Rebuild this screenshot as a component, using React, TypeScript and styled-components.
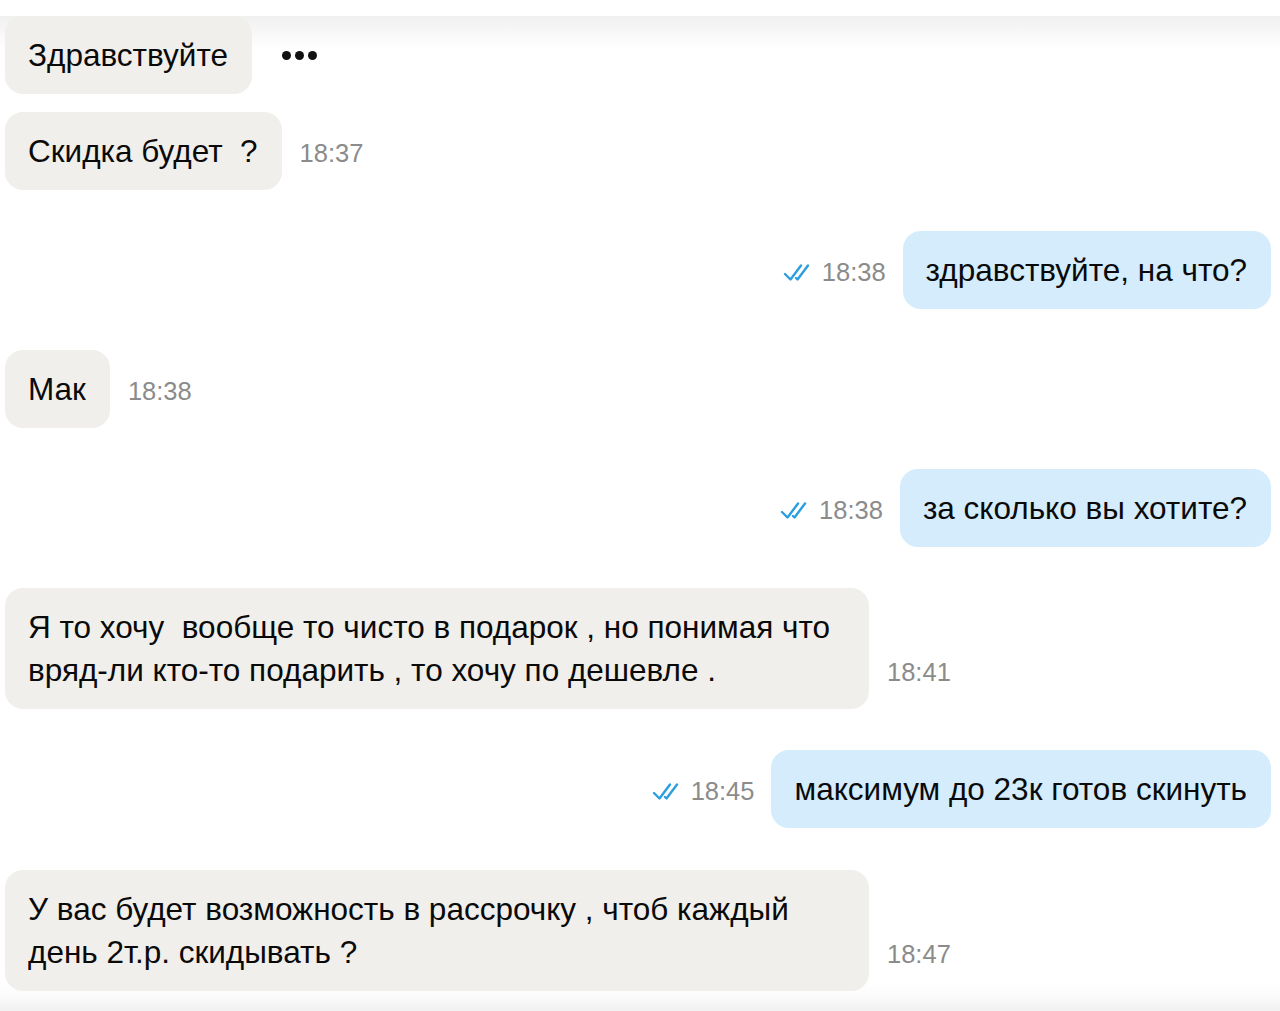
import React from "react";
import styled, { createGlobalStyle } from "styled-components";

const Global = createGlobalStyle`
  html, body { margin: 0; padding: 0; background: #fff; }
  body { font-family: "Liberation Sans", Arial, Helvetica, sans-serif; }
`;

const Page = styled.div`
  width: 1280px;
  height: 1011px;
  display: flex;
  flex-direction: column;
  background: #fff;
  overflow: hidden;
`;

const TopGap = styled.div`
  height: 16px;
  flex: none;
  background: #fff;
`;

const Chat = styled.div`
  flex: 1;
  display: flex;
  flex-direction: column;
  padding: 0 9px 0 5px;
  background:
    linear-gradient(to bottom, #f0f0f0 0px, #fafafa 22px, rgba(255,255,255,0) 34px),
    linear-gradient(to top, #f1f1f1 0px, #fbfbfb 14px, rgba(255,255,255,0) 30px),
    #fff;
`;

const Row = styled.div<{ $out?: boolean; $gap: number }>`
  display: flex;
  align-items: flex-end;
  justify-content: ${(p) => (p.$out ? "flex-end" : "flex-start")};
  margin-top: ${(p) => p.$gap}px;
`;

const Bubble = styled.div<{ $out?: boolean; $wide?: boolean }>`
  box-sizing: border-box;
  width: ${(p) => (p.$wide ? "864px" : "auto")};
  background: ${(p) => (p.$out ? "#d4ecfc" : "#f0efeb")};
  color: #0a0a0a;
  border-radius: 18px;
  padding: 18px 24px 17px 23px;
  font-size: 31.5px;
  line-height: 43px;
  white-space: nowrap;
`;

const Line = styled.div`
  white-space: pre;
`;

const Meta = styled.div<{ $out?: boolean }>`
  display: flex;
  align-items: center;
  gap: 8px;
  margin: ${(p) => (p.$out ? "0 17px 0 0" : "0 0 0 18px")};
  padding-bottom: 23px;
  font-size: 25.5px;
  line-height: 28px;
  color: #8b8b8b;
`;

const Dots = styled.div`
  display: flex;
  gap: 4px;
  margin: 0 0 34px 30px;
`;

const Dot = styled.span`
  width: 9px;
  height: 9px;
  border-radius: 50%;
  background: #111;
`;

const Check = () => (
  <svg width="31" height="20" viewBox="0 0 31 20" fill="none">
    <path d="M2 12 L7.5 17.5 L18 3.5" stroke="#2b9ee0" strokeWidth="2.4" strokeLinecap="round" strokeLinejoin="round" />
    <path d="M13 16 L14.5 17.5 L25 3.5" stroke="#2b9ee0" strokeWidth="2.4" strokeLinecap="round" strokeLinejoin="round" />
  </svg>
);

type Msg = { out?: boolean; lines: string[]; time?: string; gap: number; typing?: boolean };

const messages: Msg[] = [
  { lines: ["Здравствуйте"], gap: 0, typing: true },
  { lines: ["Скидка будет  ?"], time: "18:37", gap: 18 },
  { out: true, lines: ["здравствуйте, на что?"], time: "18:38", gap: 41 },
  { lines: ["Мак"], time: "18:38", gap: 41 },
  { out: true, lines: ["за сколько вы хотите?"], time: "18:38", gap: 41 },
  {
    lines: ["Я то хочу  вообще то чисто в подарок , но понимая что", "вряд-ли кто-то подарить , то хочу по дешевле ."],
    time: "18:41",
    gap: 41,
  },
  { out: true, lines: ["максимум до 23к готов скинуть"], time: "18:45", gap: 41 },
  {
    lines: ["У вас будет возможность в рассрочку , чтоб каждый", "день 2т.р. скидывать ?"],
    time: "18:47",
    gap: 42,
  },
];

export default function App() {
  return (
    <Page>
      <Global />
      <TopGap />
      <Chat>
        {messages.map((m, i) => (
          <Row key={i} $out={m.out} $gap={m.gap}>
            {m.out && (
              <Meta $out>
                <Check />
                <span>{m.time}</span>
              </Meta>
            )}
            <Bubble $out={m.out} $wide={m.lines.length > 1}>
              {m.lines.map((l, j) => (
                <Line key={j}>{l}</Line>
              ))}
            </Bubble>
            {!m.out && m.time && (
              <Meta>
                <span>{m.time}</span>
              </Meta>
            )}
            {m.typing && (
              <Dots>
                <Dot />
                <Dot />
                <Dot />
              </Dots>
            )}
          </Row>
        ))}
      </Chat>
    </Page>
  );
}
